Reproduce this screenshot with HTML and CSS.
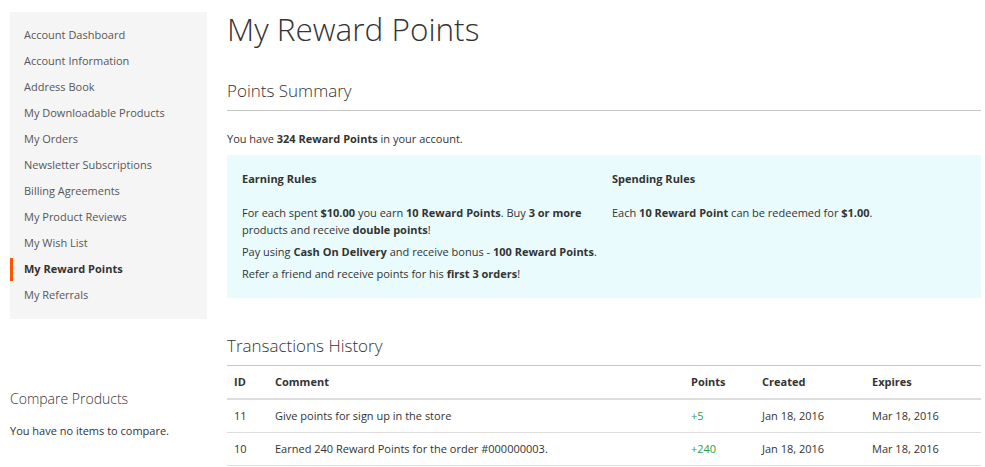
FILE: index.html
```html
<!DOCTYPE html>
<html lang="en">
<head>
    <meta charset="UTF-8">
    <title>My Reward Points</title>
    <link rel="stylesheet" href="styles.css">
</head>
<body>
    <div class="page">
        <aside class="sidebar">
            <nav class="account-nav">
                <a href="#">Account Dashboard</a>
                <a href="#">Account Information</a>
                <a href="#">Address Book</a>
                <a href="#">My Downloadable Products</a>
                <a href="#">My Orders</a>
                <a href="#">Newsletter Subscriptions</a>
                <a href="#">Billing Agreements</a>
                <a href="#">My Product Reviews</a>
                <a href="#">My Wish List</a>
                <a href="#" class="current">My Reward Points</a>
                <a href="#">My Referrals</a>
            </nav>
            <div class="compare">
                <h3>Compare Products</h3>
                <p>You have no items to compare.</p>
            </div>
        </aside>

        <main class="content">
            <h1>My Reward Points</h1>

            <h2 class="block-title">Points Summary</h2>
            <p class="balance">You have <strong>324 Reward Points</strong> in your account.</p>

            <div class="rules">
                <div class="rules-col">
                    <h4>Earning Rules</h4>
                    <p>For each spent <strong>$10.00</strong> you earn <strong>10 Reward Points</strong>. Buy <strong>3 or more</strong> products and receive <strong>double points</strong>!</p>
                    <p>Pay using <strong>Cash On Delivery</strong> and receive bonus - <strong>100 Reward Points</strong>.</p>
                    <p>Refer a friend and receive points for his <strong>first 3 orders</strong>!</p>
                </div>
                <div class="rules-col">
                    <h4>Spending Rules</h4>
                    <p>Each <strong>10 Reward Point</strong> can be redeemed for <strong>$1.00</strong>.</p>
                </div>
            </div>

            <h2 class="block-title">Transactions History</h2>
            <table class="history">
                <thead>
                    <tr>
                        <th class="col-id">ID</th>
                        <th class="col-comment">Comment</th>
                        <th class="col-points">Points</th>
                        <th class="col-created">Created</th>
                        <th>Expires</th>
                    </tr>
                </thead>
                <tbody>
                    <tr>
                        <td>11</td>
                        <td>Give points for sign up in the store</td>
                        <td class="plus">+5</td>
                        <td>Jan 18, 2016</td>
                        <td>Mar 18, 2016</td>
                    </tr>
                    <tr>
                        <td>10</td>
                        <td>Earned 240 Reward Points for the order #000000003.</td>
                        <td class="plus">+240</td>
                        <td>Jan 18, 2016</td>
                        <td>Mar 18, 2016</td>
                    </tr>
                </tbody>
            </table>
        </main>
    </div>
</body>
</html>
```

FILE: styles.css
```css
/* Global */
body {
    margin: 0;
    font-family: 'Open Sans', 'Liberation Sans', sans-serif;
    font-size: 11px;
    color: #333;
    background: #fff;
}

.page {
    display: flex;
    align-items: flex-start;
    padding: 12px 4px 0 10px;
    gap: 20px;
}

/* Sidebar */
.sidebar {
    width: 197px;
    flex-shrink: 0;
}

.account-nav {
    background: #f5f5f5;
    padding: 10px 0 11px;
    display: flex;
    flex-direction: column;
}

.account-nav a {
    position: relative;
    display: block;
    line-height: 26px;
    padding-left: 14px;
    color: #575757;
    text-decoration: none;
}

.account-nav a.current {
    color: #333;
    font-weight: 700;
}

.account-nav a.current::before {
    content: "";
    position: absolute;
    left: 0;
    top: 2px;
    bottom: 1px;
    width: 3px;
    background: #ff5501;
}

.compare {
    margin-top: 70px;
}

.compare h3 {
    margin: 0 0 15px;
    font-size: 14px;
    font-weight: 300;
    line-height: 19px;
    color: #333;
}

.compare p {
    margin: 0;
    line-height: 15px;
}

/* Main */
.content {
    flex: 1;
}

.content h1 {
    margin: 0;
    font-size: 31.5px;
    font-weight: 300;
    line-height: 34px;
    color: #333;
}

.block-title {
    margin: 0;
    font-size: 17px;
    font-weight: 300;
    line-height: 24px;
    padding-bottom: 7px;
    border-bottom: 1px solid #c6c6c6;
}

.content h1 + .block-title {
    margin-top: 33px;
}

.balance {
    margin: 20px 0 9px;
    line-height: 15px;
}

/* Rules box */
.rules {
    background: #e9fbfd;
    padding: 16px 15px 16px;
    display: grid;
    grid-template-columns: 360px 1fr;
    column-gap: 10px;
    margin-bottom: 36px;
}

.rules h4 {
    margin: 0 0 18px;
    font-size: 11px;
    font-weight: 700;
    line-height: 15px;
}

.rules p {
    margin: 0 0 5px;
    line-height: 17px;
}

.rules p:last-child {
    margin-bottom: 0;
}

/* History table */
.history {
    width: 100%;
    border-collapse: collapse;
}

.history th,
.history td {
    text-align: left;
    padding: 8px 7px;
    line-height: 16px;
    border-bottom: 1px solid #ddd;
}

.history th {
    font-weight: 700;
    border-bottom-width: 2px;
}

.col-id { width: 27px; }
.col-comment { width: 402px; }
.col-points { width: 57px; }
.col-created { width: 96px; }

.history td.plus {
    color: #2e9e44;
}
```
